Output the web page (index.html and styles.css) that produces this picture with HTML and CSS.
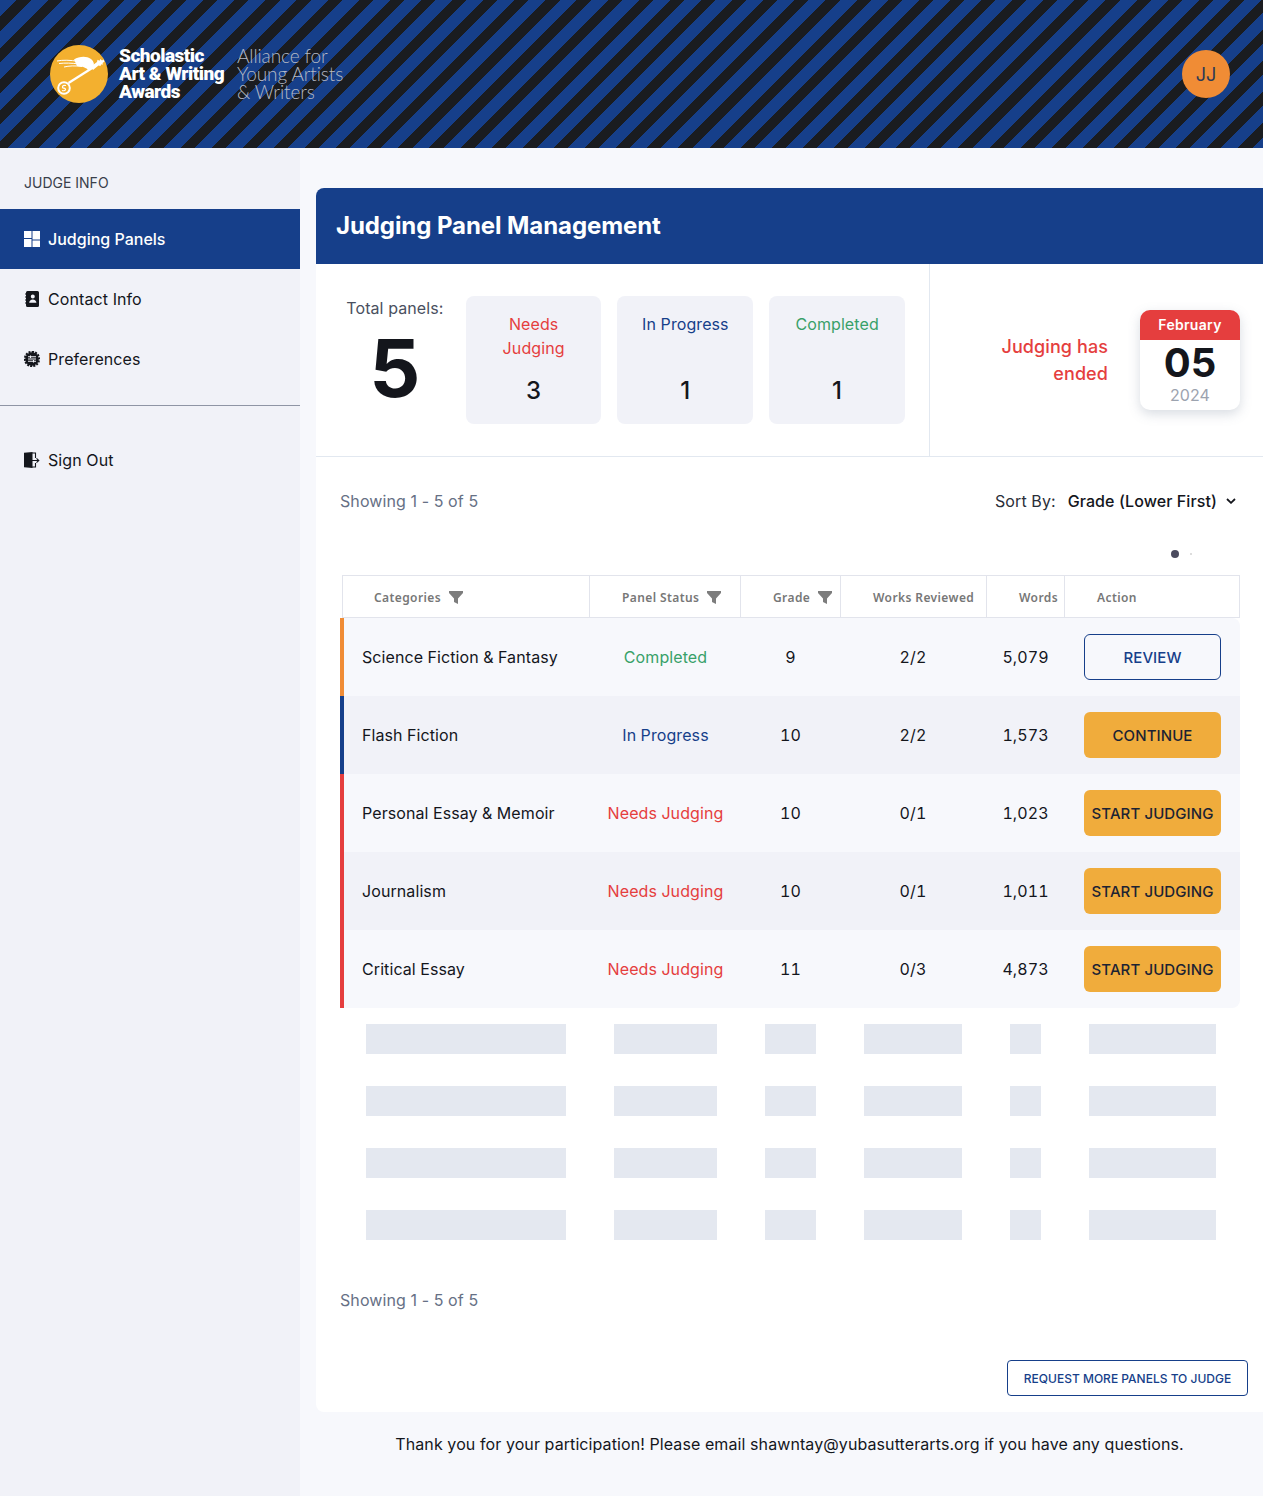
FILE: index.html
```html
<!DOCTYPE html>
<html>
<head>
  <meta charset="utf-8">
  <title>Judging Panel Management</title>
  <link rel="stylesheet" href="styles.css">
</head>
<body>
  <header class="topbar">
    <div class="brand">
      <svg class="brand-mark" viewBox="0 0 58 58" width="58" height="58">
        <circle cx="29" cy="29" r="29" fill="#f3b02f"/>
        <path fill="#fff" d="M24 14.500 C29 11.500 36 10.500 41 14 C44 16.500 45 20 42.500 23 L38.500 25.500 C36.500 22.500 32 21.500 27 21 Z"/>
        <path fill="none" stroke="#fff" stroke-width="1" d="M7 16 C13 14.800 20 15 29 16.500M9 18.500 C15 17.800 22 18 29 19M14 22 C19 20.800 25 20.500 32 21.500"/>
        <path fill="#fff" d="M41 21.500 L47 17 L47.500 14.800 L49.500 15.800 L50.500 14 L52 15.500 L53.500 14.500 L54.500 16.500 L52.500 18 L53 19.500 L51 19.500 L50.500 21 L48.500 20.500 L43 25 Z"/>
        <path d="M18.500 38 L43 22.500" stroke="#fff" stroke-width="2.200" fill="none"/>
        <circle cx="14" cy="43" r="5.800" fill="none" stroke="#fff" stroke-width="2"/>
        <path d="M16 40.500 C12 39.500 11.500 43 14 43.200 C16.500 43.500 16 46.500 12 45.500" fill="none" stroke="#fff" stroke-width="1.200"/>
      </svg>
      <div class="brand-name">Scholastic<br>Art &amp; Writing<br>Awards</div>
      <div class="brand-sub">Alliance for<br>Young Artists<br>&amp; Writers</div>
    </div>
    <div class="avatar">JJ</div>
  </header>

  <div class="layout">
    <aside class="sidebar">
      <div class="side-label">JUDGE INFO</div>
      <a class="side-link active" href="#">
        <svg class="side-icon" viewBox="0 0 16 16"><path fill="currentColor" d="M0 0h7.500v7H0zM8.500 0H16v8.500H8.500zM0 8h7.500v8H0zM8.500 9.500H16V16H8.500z"/></svg>
        Judging Panels
      </a>
      <a class="side-link" href="#">
        <svg class="side-icon" viewBox="0 0 16 16"><path fill="#14161c" fill-rule="evenodd" d="M3.500 0H13.500a1.500 1.500 0 0 1 1.500 1.500v13a1.500 1.500 0 0 1-1.500 1.500H3.500a1.500 1.500 0 0 1-1.500-1.500v-13A1.500 1.500 0 0 1 3.500 0zM8.800 3.500a2 2 0 1 0 0 4 2 2 0 0 0 0-4zM5.200 11.800h7.200c0-2-1.600-3.300-3.600-3.300s-3.600 1.300-3.600 3.300z"/><path stroke="#14161c" stroke-width="1.200" d="M1 3h2M1 6h2M1 9h2M1 12h2"/></svg>
        Contact Info
      </a>
      <a class="side-link" href="#">
        <svg class="side-icon" viewBox="0 0 16 16"><circle cx="8" cy="8" r="6.800" fill="#14161c"/><path stroke="#14161c" stroke-width="2.200" stroke-dasharray="2 1.140" fill="none" d="M8 .9a7.100 7.100 0 1 1 0 14.200a7.100 7.100 0 1 1 0-14.200z"/><path stroke="#f1f2f8" stroke-width="1.100" d="M4 5.800h8M4 10.200h8M6.500 4.500v2.500M9.500 9v2.500M4 8h8"/></svg>
        Preferences
      </a>
      <hr class="side-rule">
      <a class="side-link" href="#">
        <svg class="side-icon" viewBox="0 0 16 16"><path fill="#14161c" d="M0 .8 8.500 0v16L0 15.200z"/><path stroke="#14161c" stroke-width="1.100" fill="none" d="M8 1h3.500v5M8 15h3.500v-4M7.500 8.500h7M12.500 6.300l2.300 2.200-2.300 2.200"/></svg>
        Sign Out
      </a>
    </aside>

    <main class="main">
      <section class="card">
        <h1 class="card-title">Judging Panel Management</h1>

        <div class="stats">
          <div class="stats-left">
            <div class="total">
              <div class="total-label">Total panels:</div>
              <div class="total-num">5</div>
            </div>
            <div class="stat-box">
              <div class="stat-label red">Needs Judging</div>
              <div class="stat-num">3</div>
            </div>
            <div class="stat-box">
              <div class="stat-label blue">In Progress</div>
              <div class="stat-num">1</div>
            </div>
            <div class="stat-box">
              <div class="stat-label green">Completed</div>
              <div class="stat-num">1</div>
            </div>
          </div>
          <div class="stats-right">
            <div class="ended">Judging has<br>ended</div>
            <div class="calendar">
              <div class="cal-month">February</div>
              <div class="cal-day">05</div>
              <div class="cal-year">2024</div>
            </div>
          </div>
        </div>

        <div class="content">
          <div class="toolbar">
            <div class="showing">Showing 1 - 5 of 5</div>
            <div class="sort">
              <span class="sort-label">Sort By:</span>
              <span class="sort-value">Grade (Lower First)</span>
              <svg class="chevron" viewBox="0 0 10 6" width="10" height="6"><path d="M1 1l4 3.800L9 1" fill="none" stroke="#14161c" stroke-width="1.800"/></svg>
            </div>
          </div>

          <div class="dots"><span class="dot"></span><span class="dot-small"></span></div>

          <div class="thead">
            <div class="th">Categories <svg class="funnel" viewBox="0 0 14 13"><path fill="#7d7d7d" d="M0 0h14v2L9 7.500V13L5 11V7.500L0 2z"/></svg></div>
            <div class="th">Panel Status <svg class="funnel" viewBox="0 0 14 13"><path fill="#7d7d7d" d="M0 0h14v2L9 7.500V13L5 11V7.500L0 2z"/></svg></div>
            <div class="th">Grade <svg class="funnel" viewBox="0 0 14 13"><path fill="#7d7d7d" d="M0 0h14v2L9 7.500V13L5 11V7.500L0 2z"/></svg></div>
            <div class="th">Works Reviewed</div>
            <div class="th">Words</div>
            <div class="th">Action</div>
          </div>

          <div class="tbody">
            <div class="row bar-orange">
              <div class="cell cat">Science Fiction &amp; Fantasy</div>
              <div class="cell green">Completed</div>
              <div class="cell">9</div>
              <div class="cell">2/2</div>
              <div class="cell">5,079</div>
              <div class="cell"><a class="btn btn-outline" href="#">REVIEW</a></div>
            </div>
            <div class="row bar-blue">
              <div class="cell cat">Flash Fiction</div>
              <div class="cell blue">In Progress</div>
              <div class="cell">10</div>
              <div class="cell">2/2</div>
              <div class="cell">1,573</div>
              <div class="cell"><a class="btn" href="#">CONTINUE</a></div>
            </div>
            <div class="row bar-red">
              <div class="cell cat">Personal Essay &amp; Memoir</div>
              <div class="cell red">Needs Judging</div>
              <div class="cell">10</div>
              <div class="cell">0/1</div>
              <div class="cell">1,023</div>
              <div class="cell"><a class="btn" href="#">START JUDGING</a></div>
            </div>
            <div class="row bar-red">
              <div class="cell cat">Journalism</div>
              <div class="cell red">Needs Judging</div>
              <div class="cell">10</div>
              <div class="cell">0/1</div>
              <div class="cell">1,011</div>
              <div class="cell"><a class="btn" href="#">START JUDGING</a></div>
            </div>
            <div class="row bar-red">
              <div class="cell cat">Critical Essay</div>
              <div class="cell red">Needs Judging</div>
              <div class="cell">11</div>
              <div class="cell">0/3</div>
              <div class="cell">4,873</div>
              <div class="cell"><a class="btn" href="#">START JUDGING</a></div>
            </div>
          </div>

          <div class="skeleton">
            <div class="sk-row"><span></span><span></span><span></span><span></span><span></span><span></span></div>
            <div class="sk-row"><span></span><span></span><span></span><span></span><span></span><span></span></div>
            <div class="sk-row"><span></span><span></span><span></span><span></span><span></span><span></span></div>
            <div class="sk-row"><span></span><span></span><span></span><span></span><span></span><span></span></div>
          </div>

          <div class="showing showing-bottom">Showing 1 - 5 of 5</div>

          <div class="request"><a class="btn-request" href="#">REQUEST MORE PANELS TO JUDGE</a></div>
        </div>
      </section>

      <p class="thanks">Thank you for your participation! Please email shawntay@yubasutterarts.org if you have any questions.</p>
    </main>
  </div>
</body>
</html>
```

FILE: styles.css
```css
* {
  box-sizing: border-box;
}

body {
  margin: 0;
  background: #f7f8fc;
  color: #14161c;
  font-family: Inter, "Liberation Sans", sans-serif;
  font-size: 16px;
  letter-spacing: 0.09px;
}

a {
  text-decoration: none;
  color: inherit;
}

.red { color: #e53e3e; }
.blue { color: #163f8a; }
.green { color: #38a169; }

/* top bar */
.topbar {
  height: 148px;
  padding: 0 33px 0 50px;
  display: flex;
  align-items: center;
  justify-content: space-between;
  background: repeating-linear-gradient(135deg, #163f8a 0, #163f8a 12px, #1a1c20 12px, #1a1c20 22px);
}

.brand {
  display: flex;
  align-items: center;
}

.brand-mark {
  margin-right: 11px;
}

.brand-name {
  width: 118px;
  color: #fff;
  font-family: Roboto, sans-serif;
  font-weight: 900;
  font-size: 19px;
  line-height: 18px;
  letter-spacing: -0.5px;
}

.brand-sub {
  color: #b4b9c4;
  font-family: Lato, sans-serif;
  font-weight: 300;
  font-size: 19px;
  line-height: 18px;
  letter-spacing: -0.1px;
}

.avatar {
  width: 48px;
  height: 48px;
  border-radius: 50%;
  background: #f08c35;
  color: #2d3a55;
  font-size: 18px;
  display: flex;
  align-items: center;
  justify-content: center;
}

/* layout */
.layout {
  display: flex;
  min-height: 1348px;
}

.sidebar {
  width: 300px;
  flex-shrink: 0;
  background: #f1f2f8;
}

.side-label {
  height: 61px;
  padding: 26px 24px 0;
  font-size: 14px;
  line-height: 17px;
  color: #3a3f4b;
  letter-spacing: 0;
}

.side-link {
  height: 60px;
  padding: 0 24px;
  display: flex;
  align-items: center;
  gap: 8px;
  font-size: 16px;
}

.side-link.active {
  background: #163f8a;
  color: #fff;
  font-weight: 500;
  letter-spacing: 0;
}

.side-icon {
  width: 16px;
  height: 16px;
}

.side-rule {
  height: 1px;
  margin: 16px 0 24px;
  border: 0;
  background: #8f95a5;
}

.main {
  flex: 1;
  padding: 40px 0 0 16px;
}

/* card */
.card {
  background: #fff;
  border-radius: 8px 0 0 8px;
  height: 1224px;
}

.card-title {
  margin: 0;
  height: 76px;
  padding: 0 20px 2px;
  display: flex;
  align-items: center;
  background: #163f8a;
  color: #fff;
  font-size: 24px;
  font-weight: 700;
  letter-spacing: -0.08px;
  border-radius: 8px 0 0 0;
}

.stats {
  display: flex;
  height: 193px;
  border-bottom: 1px solid #e2e8f0;
}

.stats-left {
  width: 614px;
  padding: 32px 24px 0 0;
  display: flex;
  gap: 16px;
  border-right: 1px solid #e2e8f0;
}

.total {
  width: 134px;
  padding-left: 24px;
  text-align: center;
}

.total-label {
  line-height: 24px;
  color: #4a5060;
  white-space: nowrap;
}

.total-num {
  margin-top: 4px;
  font-size: 80px;
  font-weight: 700;
  line-height: 88px;
}

.stat-box {
  width: 136px;
  height: 128px;
  padding: 16px;
  background: #f1f2f8;
  border-radius: 8px;
  text-align: center;
}

.stat-label {
  height: 48px;
  line-height: 24px;
}

.stat-num {
  margin-top: 16px;
  font-size: 24px;
  font-weight: 500;
  line-height: 30px;
}

.stats-right {
  flex: 1;
  padding: 46px 23px 0 0;
  display: flex;
  justify-content: flex-end;
  gap: 32px;
}

.ended {
  margin-top: 23px;
  color: #e53e3e;
  font-size: 18px;
  font-weight: 500;
  line-height: 27px;
  text-align: right;
}

.calendar {
  width: 100px;
  height: 100px;
  border-radius: 10px;
  overflow: hidden;
  background: #fff;
  text-align: center;
  box-shadow: 0 4px 12px rgba(100, 116, 139, 0.25);
}

.cal-month {
  height: 30px;
  background: #e53e3e;
  color: #fff;
  font-size: 14px;
  font-weight: 600;
  line-height: 30px;
  letter-spacing: 0.3px;
}

.cal-day {
  font-size: 40px;
  font-weight: 700;
  line-height: 46px;
}

.cal-year {
  color: #9ca3af;
  font-size: 16px;
  line-height: 18px;
}

/* panel list */
.content {
  padding: 32px 15px 0 24px;
}

.toolbar {
  display: flex;
  justify-content: space-between;
  align-items: center;
  height: 24px;
  padding-right: 12px;
}

.showing {
  color: #667085;
  line-height: 24px;
}

.sort {
  display: flex;
  align-items: center;
}

.sort-label {
  margin-right: 12px;
  color: #2a2e38;
}

.sort-value {
  margin-right: 9px;
  font-weight: 500;
}

.dots {
  height: 62px;
  padding: 37px 0 0 831px;
  display: flex;
  align-items: flex-start;
  gap: 11px;
}

.dot {
  width: 8px;
  height: 8px;
  border-radius: 50%;
  background: #4b4b5e;
}

.dot-small {
  width: 2px;
  height: 2px;
  margin-top: 3px;
  background: #ddd;
}

.thead {
  width: 898px;
  margin-left: 2px;
  height: 43px;
  display: grid;
  grid-template-columns: 246px 151px 100px 146px 78px 175px;
  border: 1px solid #e2e4ec;
}

.th {
  padding: 2px 0 0 32px;
  display: flex;
  align-items: center;
  gap: 8px;
  border-left: 1px solid #e2e4ec;
  color: #777;
  font-family: "Noto Sans", sans-serif;
  font-size: 12px;
  font-weight: 600;
  letter-spacing: 0.4px;
  white-space: nowrap;
}

.th:first-child {
  padding-left: 31px;
  border-left: 0;
}

.funnel {
  width: 14px;
  height: 13px;
}

.tbody {
  width: 900px;
  border-radius: 0 8px 8px 0;
  overflow: hidden;
}

.row {
  height: 78px;
  display: grid;
  grid-template-columns: 250px 151px 99px 146px 79px 175px;
  background: #f7f8fc;
}

.row:nth-child(even) {
  background: #f1f2f8;
}

.bar-orange { box-shadow: inset 4px 0 #f08c35; }
.bar-blue { box-shadow: inset 4px 0 #163f8a; }
.bar-red { box-shadow: inset 4px 0 #e53e3e; }

.cell {
  display: flex;
  align-items: center;
  justify-content: center;
  white-space: nowrap;
  font-variant-numeric: tabular-nums;
}

.cell.cat {
  justify-content: flex-start;
  padding-left: 22px;
}

.btn {
  width: 137px;
  height: 46px;
  display: flex;
  align-items: center;
  justify-content: center;
  border-radius: 6px;
  background: #f0ac3c;
  color: #1c2333;
  font-size: 15px;
  font-weight: 500;
}

.btn-outline {
  background: transparent;
  border: 1px solid #163f8a;
  color: #163f8a;
}

.skeleton {
  width: 900px;
}

.sk-row {
  height: 62px;
  padding: 16px 0;
  display: grid;
  grid-template-columns: 250px 151px 99px 146px 79px 175px;
}

.sk-row span {
  height: 30px;
  margin: 0 24px;
  background: #e4e8f0;
}

.sk-row span:first-child {
  margin-left: 26px;
}

.showing-bottom {
  margin-top: 32px;
}

.request {
  margin-top: 48px;
  display: flex;
  justify-content: flex-end;
}

.btn-request {
  width: 241px;
  height: 36px;
  display: flex;
  align-items: center;
  justify-content: center;
  border: 1px solid #163f8a;
  border-radius: 4px;
  color: #163f8a;
  font-size: 12px;
  font-weight: 500;
  letter-spacing: 0;
}

.thanks {
  margin: 22px 0 0;
  line-height: 20px;
  text-align: center;
  color: #14161c;
}
```
